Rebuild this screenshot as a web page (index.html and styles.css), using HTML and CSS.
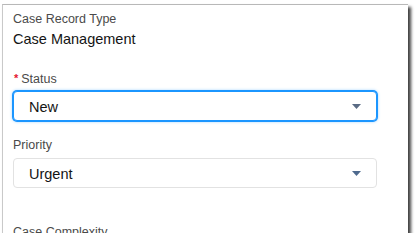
FILE: index.html
```html
<!DOCTYPE html>
<html lang="en">
<head>
<meta charset="utf-8">
<title>Case</title>
<link rel="stylesheet" href="styles.css">
</head>
<body>
<div class="panel">
  <div class="label">Case Record Type</div>
  <div class="value">Case Management</div>

  <div class="label label-status"><span class="req">*</span>Status</div>
  <div class="select select-focus">
    <span class="select-text">New</span>
    <svg class="caret" width="9" height="5" viewBox="0 0 9 5"><path d="M0 0H9L4.5 5Z" fill="#5a6b84"/></svg>
  </div>

  <div class="label label-priority">Priority</div>
  <div class="select">
    <span class="select-text">Urgent</span>
    <svg class="caret" width="9" height="5" viewBox="0 0 9 5"><path d="M0 0H9L4.5 5Z" fill="#4f6a8e"/></svg>
  </div>

  <div class="label label-complexity">Case Complexity</div>
</div>
</body>
</html>
```
FILE: styles.css
```css
html, body {
  margin: 0;
  padding: 0;
  background: #ffffff;
}
body {
  font-family: "Liberation Sans", Arial, sans-serif;
}
.panel {
  box-sizing: border-box;
  margin: 4px 0 0 2px;
  width: 406px;
  height: 229px;
  padding: 6px 31px 0 10px;
  background: #ffffff;
  border-top: 1px solid #b8b8b8;
  border-left: 1px solid #c9c9c9;
  box-shadow: 3px 3px 3px rgba(0, 0, 0, 0.75);
  overflow: hidden;
}
.label {
  font-size: 12.5px;
  line-height: 16px;
  color: #4a4a4a;
}
.value {
  margin-top: 2px;
  font-size: 14.5px;
  line-height: 20px;
  color: #141414;
}
.label-status {
  margin-top: 21px;
}
.req {
  display: inline-block;
  font-size: 11px;
  font-weight: bold;
  color: #e4162f;
  margin: 0 3px 0 1px;
  vertical-align: 1px;
}
.select {
  box-sizing: border-box;
  margin-top: 4px;
  height: 30px;
  display: flex;
  align-items: center;
  justify-content: space-between;
  padding: 2px 15px 0 15px;
  border: 1px solid #e2e2e2;
  border-radius: 4px;
  background: #ffffff;
}
.select-focus {
  border-color: #1b96ff;
  box-shadow: 0 0 0 1px #1b96ff, 0 0 3px 1px #a9d6ff;
}
.select-text {
  font-size: 14.5px;
  line-height: 20px;
  color: #141414;
}
.caret {
  display: block;
  margin-top: -1px;
}
.label-priority {
  margin-top: 16px;
}
.label-priority + .select {
  margin-top: 5px;
}
.label-complexity {
  margin-top: 36px;
}
```
